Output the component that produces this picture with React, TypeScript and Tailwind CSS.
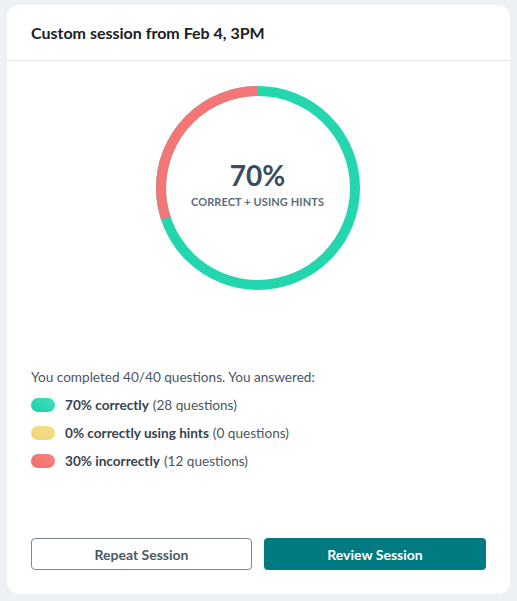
import React from "react";

export default function App() {
  const r = 97;
  const c = 2 * Math.PI * r;
  const red = 0.3 * c;
  return (
    <div className="w-[517px] h-[601px] bg-[#edf1f4] pt-[5px] pl-[7px]" style={{ fontFamily: "Lato, 'Open Sans', sans-serif" }}>
      <div className="w-[503px] h-[589px] bg-white rounded-[12px] flex flex-col">
        <div className="h-[56px] border-b border-[#e3e7ea] flex items-center pl-[24px] pt-[1px]">
          <span className="text-[16px] font-bold text-[#1c2024]">Custom session from Feb 4, 3PM</span>
        </div>
        <div className="flex justify-center pt-[25px] pr-[2px]">
          <div className="relative w-[204px] h-[204px]">
            <svg width="204" height="204" viewBox="0 0 204 204">
              <circle cx="102" cy="102" r={r} fill="none" stroke="#23d6ad" strokeWidth="10" />
              <circle
                cx="102"
                cy="102"
                r={r}
                fill="none"
                stroke="#f47676"
                strokeWidth="10"
                strokeDasharray={`${red} ${c}`}
                transform="rotate(-90 102 102) scale(1 -1) translate(0 -204)"
              />
            </svg>
            <div className="absolute inset-0 flex flex-col items-center justify-center pb-[6px]">
              <span className="text-[28px] font-bold text-[#3b4d5a] leading-[32px]">70%</span>
              <span className="text-[11px] font-bold text-[#5b6c7a] mt-[3px] tracking-[0.1px]">CORRECT + USING HINTS</span>
            </div>
          </div>
        </div>
        <div className="pl-[24px] pt-[78px] text-[13.6px] text-[#4a5663]">
          <div className="leading-[18px]">You completed 40/40 questions. You answered:</div>
          <div className="flex flex-col gap-[10px] mt-[10px]">
            <div className="flex items-center h-[18px]">
              <span className="w-[24px] h-[14px] rounded-full bg-gradient-to-tr from-[#1ccfa8] to-[#3ee0bc] mr-[10px]" />
              <span className="font-bold text-[#37434e]">70% correctly</span>
              <span className="ml-[4px]">(28 questions)</span>
            </div>
            <div className="flex items-center h-[18px]">
              <span className="w-[24px] h-[14px] rounded-full bg-gradient-to-tr from-[#f2d371] to-[#f7df8e] mr-[10px]" />
              <span className="font-bold text-[#37434e]">0% correctly using hints</span>
              <span className="ml-[4px]">(0 questions)</span>
            </div>
            <div className="flex items-center h-[18px]">
              <span className="w-[24px] h-[14px] rounded-full bg-gradient-to-tr from-[#f06c6c] to-[#f78585] mr-[10px]" />
              <span className="font-bold text-[#37434e]">30% incorrectly</span>
              <span className="ml-[4px]">(12 questions)</span>
            </div>
          </div>
        </div>
        <div className="mt-auto mb-[24px] px-[24px] flex gap-[12px]">
          <button className="w-[221px] h-[32px] rounded-[4px] border border-[#7a8894] text-[14px] font-bold text-[#4a5866]">Repeat Session</button>
          <button className="w-[222px] h-[32px] rounded-[4px] bg-[#027a82] text-[14px] font-bold text-white">Review Session</button>
        </div>
      </div>
    </div>
  );
}
